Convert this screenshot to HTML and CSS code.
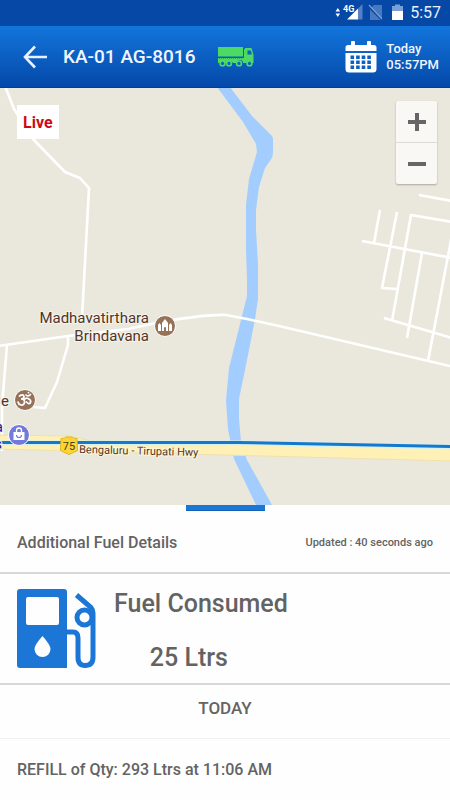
FILE: index.html
```html
<!DOCTYPE html>
<html lang="en">
<head>
<meta charset="utf-8">
<meta name="viewport" content="width=device-width, initial-scale=1">
<title>KA-01 AG-8016</title>
<link rel="stylesheet" href="styles.css">
</head>
<body>
<div class="status">
  <svg class="status-icons" width="70" height="20" viewBox="336 4 70 20" aria-hidden="true">
    <path fill="#fff" d="M336.500 12.500l2.300-3.500 2.300 3.500zM336.500 14.500l2.300 3.500 2.300-3.500z"/>
    <text class="network" x="344" y="13">4G</text>
    <path fill="#5580c8" d="M359 9.500l4.500-4.500v15.500H359z"/>
    <path fill="#fff" d="M359 9.500v11h-11z"/>
    <path fill="#4878bd" d="M375 6h8v15h-12V10z"/>
    <path fill="none" stroke="#0b49a8" stroke-width="2" d="M370 8l14 14"/>
    <path fill="none" stroke="#7aa0d6" stroke-width="1.200" d="M370 6l13 14"/>
    <path fill="#7ba0d8" d="M393 7h3V5.500h5V7h3v5h-11z"/>
    <path fill="#fff" d="M393 12h11v9h-11z"/>
  </svg>
  <span class="clock">5:57</span>
</div>

<header class="topbar">
  <button class="back" type="button" aria-label="Back">
    <svg width="24" height="24" viewBox="0 0 24 24" fill="none" stroke="#e8f2ff" stroke-width="2.600" aria-hidden="true"><path d="M12 1.500L2 12l10 10.500M2 12h22"/></svg>
  </button>
  <h1 class="vehicle">KA-01 AG-8016</h1>
  <svg class="truck" width="36" height="20" viewBox="0 0 36 20" aria-hidden="true">
    <path fill="#4cd964" d="M0 0h25v9.500H0zM26 2.500L27.500 1h6l1.500 5 .5 2v8H34a3 3 0 0 0-5.500 0H25a3 3 0 0 0-6 0h-4a3 3 0 0 0-5.500 0H7a3 3 0 0 0-5.500 0H0v-5h26z"/>
    <path fill="#0d5fc4" d="M29.500 3.500h3.300l1 4h-4.300z"/>
    <path stroke="#0d5fc4" stroke-dasharray="1 1" d="M1 11h24"/>
    <g fill="#0d5fc4" stroke="#4cd964" stroke-width="1.600"><circle cx="4.500" cy="16.400" r="2.400"/><circle cx="11" cy="16.400" r="2.400"/><circle cx="21" cy="16.400" r="2.400"/><circle cx="31.500" cy="16.400" r="2.400"/></g>
  </svg>
  <button class="date" type="button">
    <svg width="32" height="32" viewBox="0 0 32 32" aria-hidden="true">
      <path fill="#fff" d="M3 4h3V1.500a1.500 1.500 0 0 1 4 0V4h12V1.500a1.500 1.500 0 0 1 4 0V4h3a2.500 2.500 0 0 1 2.500 2.500V10H.5V6.500A2.500 2.500 0 0 1 3 4zM.5 12h31v16a3.500 3.500 0 0 1-3.500 3.500H4A3.500 3.500 0 0 1 .5 28z"/>
      <path fill="none" stroke="#0e5fc2" stroke-width="3.400" stroke-dasharray="3.600 2" d="M5.500 16.200h21M5.500 21.200h21M5.500 26.200h21"/>
    </svg>
    <span class="date-text">Today<br>05:57PM</span>
  </button>
</header>

<main class="map">
  <svg class="map-canvas" viewBox="0 88 450 417" preserveAspectRatio="xMinYMin slice" role="img" aria-label="Map">
    <path fill="#a3ccff" d="M217 87h13l22 29 20 20q1 1 1 4v13q0 4-3 8l-5 7-6 19-3 23v20l2 35v34l-3 20-7 36-9 44v20l2 23 6 18 25 45h-16l-22-46-6-30-2-28 3-33 13-52 5-20v-15l-1-34V205l3-26 8-27-1-8-13-22z"/>
    <g fill="none" stroke="#fff" stroke-width="2.600" stroke-linejoin="round">
      <path d="M5 86l9 23 20 31 31 32 15 6 9 10-7 130"/>
      <path d="M-2 346l70-10 60-7 37-8q45-7 61-6l21 4 32 7 171 40"/>
      <path d="M7 345l-5 61v45M68 336v9l-11 37-12 26-23-2"/>
      <path d="M419 195l33 6M362 241l90 17M380 210l-6 33M397 212l-15 76 15 1M452 222l-41-7-19 106M422 253l-15 85M452 235l-24 126M384 318l68 20"/>
    </g>
    <path fill="#fff0b5" stroke="#efe0af" stroke-width="1" d="M-2 435l70 1 24 5 360 5v15L-2 449z"/>
    <path fill="none" stroke="#d7f0f2" stroke-width="5" d="M-2 443l240 0 214 4"/>
    <path fill="none" stroke="#1478cc" stroke-width="3" d="M-2 442.500h240l214 4"/>

    <g class="place" text-anchor="end">
      <text x="149" y="323">Madhavatirthara</text>
      <text x="149" y="341">Brindavana</text>
      <text x="9" y="406">e</text>
    </g>
    <g class="place shop" text-anchor="end"><text x="3" y="432">a</text><text x="2" y="449">s</text></g>

    <g stroke="#fff" stroke-width="1">
      <circle cx="165" cy="326" r="10.500" fill="#967259"/>
      <circle cx="25" cy="400" r="10.500" fill="#967259"/>
      <circle cx="19" cy="435" r="10.500" fill="#727bdc"/>
    </g>
    <path fill="#fff" d="M158 331v-6l1.500-2 1.500 2v6zM162 331v-8l3-4 3 4v8h-2v-3a1 1 0 0 0-2 0v3zM169 331v-6l1.500-2 1.500 2v6z"/>
    <g fill="none" stroke="#fff" stroke-width="1.700" stroke-linecap="round"><path d="M19.500 396q4-2.500 4.500.5 0 2.500-3 2.500 4 0 3.500 3.500-.5 3-3.500 2.500-2.500-.5-3-3M24 400q2-2.500 4-1.500 3.500 1.500 2.500 4-1.500 2.500-4-.5M26 395q2 2 4.500-.5M28.500 392.500v.2"/></g>
    <path fill="#fff" d="M13.500 432h11v8h-11z"/>
    <path fill="none" stroke="#fff" stroke-width="1.300" d="M16.500 432v-1.500a2.500 2.500 0 0 1 5 0v1.500"/>
    <path fill="none" stroke="#727bdc" stroke-width="1.200" d="M16.500 435a2.500 2.500 0 0 0 5 0"/>
    <path fill="#fcd535" stroke="#dfb520" stroke-width="1" d="M61 438.500q4 0 5-1.500h6q1 1.500 5 1.500l.5 12-8.500 4-8.500-4z"/>
    <text class="shield" x="69" y="450" text-anchor="middle">75</text>
    <text class="road" x="79" y="453" transform="rotate(1.500 79 453)">Bengaluru - Tirupati Hwy</text>
  </svg>
  <span class="live">Live</span>
  <div class="zoom">
    <button type="button" aria-label="Zoom in"><svg width="18" height="18" viewBox="0 0 18 18" aria-hidden="true"><path d="M0 9h18M9 0v18"/></svg></button>
    <button type="button" aria-label="Zoom out"><svg width="18" height="18" viewBox="0 0 18 18" aria-hidden="true"><path d="M0 9h18"/></svg></button>
  </div>
</main>

<section class="sheet">
  <div class="handle"></div>
  <div class="sheet-head">
    <h2 class="title">Additional Fuel Details</h2>
    <span class="updated">Updated : 40 seconds ago</span>
  </div>
  <div class="fuel">
    <svg width="80" height="80" viewBox="0 0 80 80" aria-hidden="true">
      <path fill="#1b76d6" fill-rule="evenodd" d="M3 0h44q3 0 3 3v76H3q-3 0-3-3V3q0-3 3-3zM11 8q-2 0-2 2v24q0 2 2 2h29q2 0 2-2V10q0-2-2-2zM25.500 47q-8 9-8 13a8 8 0 0 0 16 0q0-4-8-13z"/>
      <circle cx="67.500" cy="28.500" r="7.500" fill="none" stroke="#1b76d6" stroke-width="5"/>
      <path fill="none" stroke="#1b76d6" stroke-width="5" d="M49 43h7q5 0 5 6v19q0 8.500 7 8.500 8 0 8-8.500V24q0-3-2-5.500L59.500 6"/>
    </svg>
    <div class="fuel-data">
      <span>Fuel Consumed</span>
      <span class="amount">25 Ltrs</span>
    </div>
  </div>
  <h3 class="day">TODAY</h3>
  <p class="entry">REFILL of Qty: 293 Ltrs at 11:06 AM</p>
</section>
</body>
</html>
```
FILE: styles.css
```css
* {
  box-sizing: border-box;
}

body {
  margin: 0;
  min-height: 100vh;
  display: flex;
  flex-direction: column;
  background: #fefefe;
  color: #636363;
  font-family: Roboto, "Liberation Sans", sans-serif;
  font-weight: 500;
}

h1, h2, h3, p {
  margin: 0;
  font-weight: 500;
}

button {
  border: 0;
  padding: 0;
  background: none;
  color: inherit;
  font: inherit;
}

svg {
  display: block;
  flex: none;
}

.status {
  height: 26px;
  padding: 0 9px;
  display: flex;
  align-items: center;
  justify-content: flex-end;
  gap: 5px;
  background: #0548a5;
  color: #e8f0fc;
}

.network {
  fill: #fff;
  font-size: 9px;
  font-weight: 700;
}

.clock {
  font-size: 16px;
  font-weight: 400;
  line-height: 28px;
}

.topbar {
  height: 62px;
  padding: 0 11px 0 23px;
  display: flex;
  align-items: center;
  background: linear-gradient(#1375dc, #0449a9);
  border-bottom: 1px solid #063f91;
  color: #f0f6ff;
}

.vehicle {
  margin-left: 16px;
  font-size: 19px;
  line-height: 24px;
}

.truck {
  margin-left: 23px;
}

.date {
  margin-left: auto;
  display: flex;
  align-items: center;
  gap: 9px;
  text-align: left;
}

.date-text {
  font-size: 13px;
  line-height: 16px;
}

.map {
  position: relative;
  flex: 1 0 auto;
  min-height: 400px;
  background: #eae8dd;
  overflow: hidden;
}

.map-canvas {
  position: absolute;
  inset: 0;
  width: 100%;
  height: 100%;
}

.place {
  fill: #523527;
  stroke: #f6f4ed;
  stroke-width: 2px;
  paint-order: stroke;
  font-size: 15px;
  font-weight: 400;
}

.shop {
  fill: #1b1ba0;
}

.shield {
  fill: #4a3a10;
  font-size: 11px;
  font-weight: 400;
}

.road {
  fill: #523527;
  stroke: #fff6d5;
  stroke-width: 2px;
  paint-order: stroke;
  font-size: 11px;
  font-weight: 400;
}

.live {
  position: absolute;
  top: 17px;
  left: 17px;
  padding: 6px 6px 4px;
  background: #fff;
  color: #cf0a14;
  font-size: 16px;
  font-weight: 700;
  line-height: 24px;
}

.zoom {
  position: absolute;
  top: 13px;
  right: 13px;
  width: 41px;
  border-radius: 2px;
  background: #f9f8f5;
  box-shadow: 0 1px 2px #aaa89f;
}

.zoom button {
  width: 100%;
  height: 41px;
  display: grid;
  place-items: center;
}

.zoom button + button {
  height: 42px;
  border-top: 1px solid #dcdbd6;
}

.zoom path {
  stroke: #666;
  stroke-width: 4px;
}

.handle {
  width: 79px;
  height: 6px;
  margin: 0 auto;
  background: #1b76d6;
  border-bottom: 1px solid #1262b8;
}

.sheet-head {
  height: 63px;
  padding: 2px 17px 0;
  display: flex;
  align-items: center;
  justify-content: space-between;
  border-bottom: 2px solid #d8d8d8;
}

.title {
  font-size: 16px;
  line-height: 24px;
}

.updated {
  font-size: 11px;
  line-height: 24px;
}

.fuel {
  height: 111px;
  padding: 15px 17px;
  display: flex;
  align-items: flex-start;
  gap: 17px;
  border-bottom: 2px solid #d8d8d8;
}

.fuel-data {
  display: flex;
  flex-direction: column;
  gap: 24px;
  font-size: 25px;
  line-height: 30px;
}

.amount {
  padding-right: 24px;
  text-align: center;
}

.day {
  padding: 11px 0 18px;
  border-bottom: 1px solid #f0f0f0;
  font-size: 17px;
  line-height: 24px;
  text-align: center;
}

.entry {
  padding: 19px 17px 18px;
  font-size: 16px;
  line-height: 24px;
}
```
